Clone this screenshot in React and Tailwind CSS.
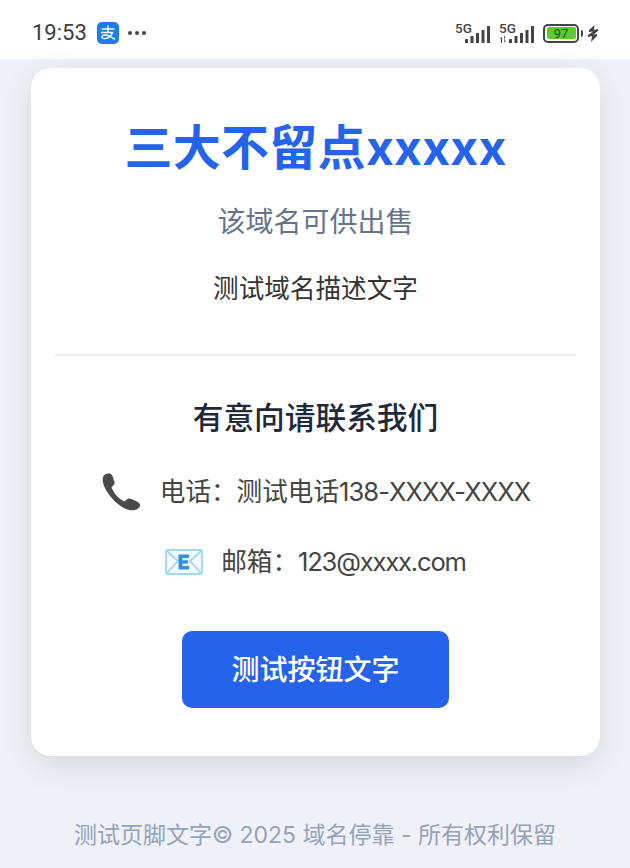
const cjk = { fontFamily: 'Inter, "Noto Sans CJK SC", sans-serif' };

function Signal({ roaming }) {
  return (
    <div className="relative h-[22px] w-[36px]">
      <span className="absolute left-0 top-[-2px] text-[13.500px] font-medium leading-[16px] text-[#444]" style={{ fontFamily: 'Roboto, sans-serif' }}>5G</span>
      <svg className="absolute left-0 top-0" width="36" height="22" viewBox="0 0 36 22" fill="#444">
        {roaming && (
          <g>
            <path d="M1 17 L3 14.500 L3 21 L2 21 L2 17 Z M5 21 L7 18.500 L5 18.500 L5 14 L6 14 Z" />
          </g>
        )}
        <rect x="10" y="17" width="3" height="4" rx="0.500" />
        <rect x="15.500" y="14" width="3" height="7" rx="0.500" />
        <rect x="21" y="11" width="3" height="10" rx="0.500" />
        <rect x="26.500" y="8" width="3" height="13" rx="0.500" />
        <rect x="32" y="4" width="3" height="17" rx="0.500" />
      </svg>
    </div>
  );
}

// alipay mark, the tail of the glyph runs out to the right
function AlipayIcon() {
  return (
    <svg className="ml-[10px]" width="22" height="22" viewBox="0 0 22 22">
      <rect width="22" height="22" rx="5" fill="#1d7cf2" />
      <path
        d="M5 7 H17 M11 4 V10 M4.500 10.500 H15.500 C14.500 13.500 12 16 8.500 16.500 C5.500 17 4.500 15.500 5 14.300 C5.700 12.800 9 12.500 12 14 C14 15 15.500 16 17.500 17"
        fill="none"
        stroke="#fff"
        strokeWidth="1.400"
        strokeLinecap="round"
      />
    </svg>
  );
}

function StatusBar() {
  return (
    <div className="flex h-[59px] items-center justify-between bg-white pl-[32px] pr-[32px] pt-[7px]">
      <div className="flex items-center">
        <span className="text-[22px] leading-none text-[#3c3c3c]" style={{ fontFamily: 'Roboto, sans-serif' }}>19:53</span>
        <AlipayIcon />
        <div className="ml-[9px] flex gap-[3px]">
          <span className="h-[4px] w-[4px] rounded-full bg-[#444]" />
          <span className="h-[4px] w-[4px] rounded-full bg-[#444]" />
          <span className="h-[4px] w-[4px] rounded-full bg-[#444]" />
        </div>
      </div>
      <div className="flex items-center">
        <Signal />
        <div className="ml-[8px]"><Signal roaming /></div>
        <div className="ml-[8px] flex items-center">
          <div className="flex h-[19px] w-[36px] items-center rounded-[5px] border-2 border-[#444] p-[1.500px]">
            <div className="flex h-full w-full items-center justify-center rounded-[2px] bg-[#5fc92e] text-[13px] leading-none text-[#2b4a1a]" style={{ fontFamily: 'Roboto, sans-serif' }}>97</div>
          </div>
          <span className="ml-[2px] h-[7px] w-[2px] rounded-r-sm bg-[#444]" />
        </div>
        <svg className="ml-[5px]" width="10" height="17" viewBox="0 0 10 17" fill="#444">
          <path d="M6.500 0 L1 5 L1 7 L5 6.500 L0 10 L0 12 L4 11 L3 17 L9 11 L9 9 L5.500 9.500 L10 6 L10 4 L6 5 Z" />
        </svg>
      </div>
    </div>
  );
}

function PhoneIcon() {
  return (
    <svg width="42" height="40" viewBox="0 0 42 40">
      <path
        d="M3 3.500 C5 1.500 8 1 10 2 C11.500 3 12.500 7 13.500 10 C14 12 12.500 13.500 10.500 15 C12 20 17.500 27 23.500 29.500 C25 28 27 26 29 26.500 C32 27.500 37 29.500 38.500 31.500 C40 33.500 38.500 36 35.500 37.500 C31 39.500 24 38 17 32 C9 25.500 3.500 17 2 10.500 C1.500 8 1.500 5 3 3.500 Z"
        fill="#4a4a4a"
      />
    </svg>
  );
}

function MailIcon() {
  return (
    <svg width="38" height="26" viewBox="0 0 38 26">
      <rect x="1" y="1" width="36" height="24" rx="1.500" fill="#f4fbff" stroke="#9fd6f2" strokeWidth="1.800" />
      <path d="M1.500 1.500 L13 12 L1.500 24.500 M36.500 1.500 L25 12 L36.500 24.500" fill="none" stroke="#9fd6f2" strokeWidth="1.800" />
      <path d="M13.500 5.500 H24 V9 H17.500 V11.300 H23 V14.600 H17.500 V17 H24 V20.500 H13.500 Z" fill="#2f8fe0" />
    </svg>
  );
}

export default function App() {
  return (
    <div className="flex min-h-screen flex-col bg-[#eff1f6]" style={cjk}>
      <StatusBar />
      <div className="pl-[31px] pr-[30px] pt-[9px]">
        <div className="rounded-[20px] bg-white px-[24px] pb-[48px] pt-[48px] text-center shadow-[0_10px_32px_rgba(0,0,0,0.1)]">
          <h1 className="text-[48px] font-bold leading-[64px] tracking-[0.300px] text-[#2563eb]">三大不留点xxxxx</h1>
          <p className="mt-[22px] text-[28px] leading-[40px] text-[#64748b]">该域名可供出售</p>
          <p className="mt-[29px] text-[25.600px] leading-[36px] text-[#333]">测试域名描述文字</p>

          <div className="mt-[47px] border-t-2 border-[#eceef1]" />

          <h2 className="mt-[40px] text-[30.700px] font-medium leading-[44px] text-[#1e293b]">有意向请联系我们</h2>
          <div className="mt-[32px] flex h-[40px] items-center justify-center gap-[17px] text-[25.600px] text-[#444]">
            <PhoneIcon />
            <span>电话：测试电话<span className="tracking-[-0.950px]">138-XXXX-XXXX</span></span>
          </div>
          <div className="mt-[30px] flex h-[40px] items-center justify-center gap-[18px] text-[25.600px] text-[#444]">
            <MailIcon />
            <span>邮箱：<span className="tracking-[-1.200px]">123@xxxx.com</span></span>
          </div>
          <button className="mt-[49px] h-[77px] w-[267px] rounded-[10px] bg-[#2563eb] text-[28px] font-medium text-white">测试按钮文字</button>
        </div>
      </div>
      <p className="mt-[62px] text-center text-[23px] leading-[34px] text-[#94a3b8]">测试页脚文字© 2025 域名停靠 - 所有权利保留</p>
    </div>
  );
}
